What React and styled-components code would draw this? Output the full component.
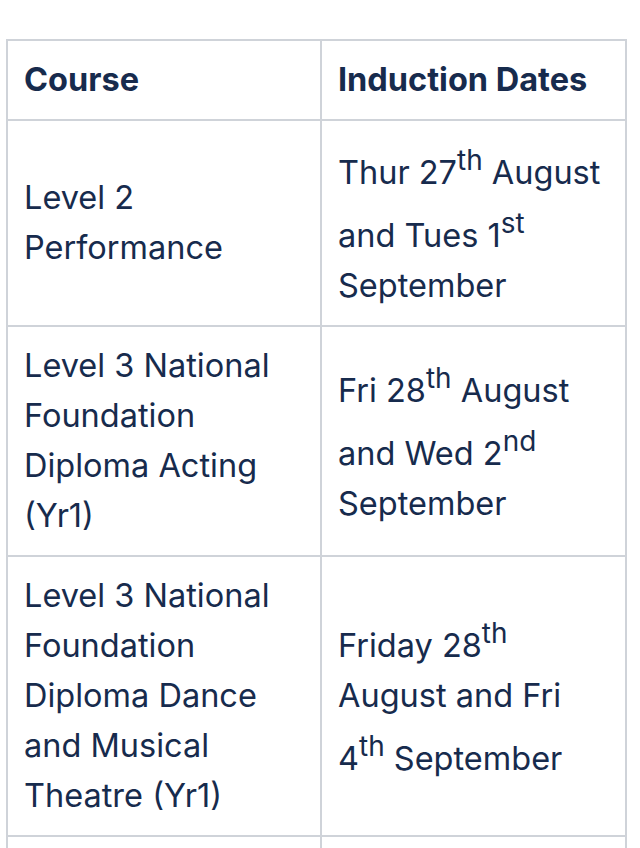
import React from "react";
import styled, { createGlobalStyle } from "styled-components";

const Global = createGlobalStyle`
  html, body { margin: 0; padding: 0; background: #ffffff; }
  body { font-family: Inter, "Noto Sans", sans-serif; color: #172b4d; }
`;

const Page = styled.div`
  padding: 39px 0 0 6px;
`;

const Table = styled.table`
  border-collapse: collapse;
  width: 619px;
  table-layout: fixed;
  font-size: 32.5px;
  line-height: 50px;
  color: #172b4d;
`;

const Col = styled.col`
  width: ${(p) => p.$w}px;
`;

const Th = styled.th`
  border: 2px solid #cfd3d9;
  padding: 14px 16px;
  text-align: left;
  font-weight: 700;
  vertical-align: middle;
`;

const Td = styled.td`
  border: 2px solid #cfd3d9;
  padding: 14px 16px;
  vertical-align: middle;
  font-weight: 400;
`;

const Sup = styled.sup`
  font-size: 0.86em;
  vertical-align: 14px;
  line-height: 50px;
`;

const rows = [
  {
    course: "Level 2 Performance",
    dates: (
      <>
        Thur 27<Sup>th</Sup> August and Tues 1<Sup>st</Sup> September
      </>
    ),
  },
  {
    course: "Level 3 National Foundation Diploma Acting (Yr1)",
    dates: (
      <>
        Fri 28<Sup>th</Sup> August and Wed 2<Sup>nd</Sup> September
      </>
    ),
  },
  {
    course: "Level 3 National Foundation Diploma Dance and Musical Theatre (Yr1)",
    dates: (
      <>
        Friday 28<Sup>th</Sup> August and Fri 4<Sup>th</Sup> September
      </>
    ),
  },
  { course: "Level 3 National Foundation Diploma", dates: <>Tues 1<Sup>st</Sup> September</> },
];

export default function App() {
  return (
    <Page>
      <Global />
      <Table>
        <colgroup>
          <Col $w={314} />
          <Col $w={305} />
        </colgroup>
        <thead>
          <tr>
            <Th>Course</Th>
            <Th>Induction Dates</Th>
          </tr>
        </thead>
        <tbody>
          {rows.map((r, i) => (
            <tr key={i}>
              <Td>{r.course}</Td>
              <Td>{r.dates}</Td>
            </tr>
          ))}
        </tbody>
      </Table>
    </Page>
  );
}
